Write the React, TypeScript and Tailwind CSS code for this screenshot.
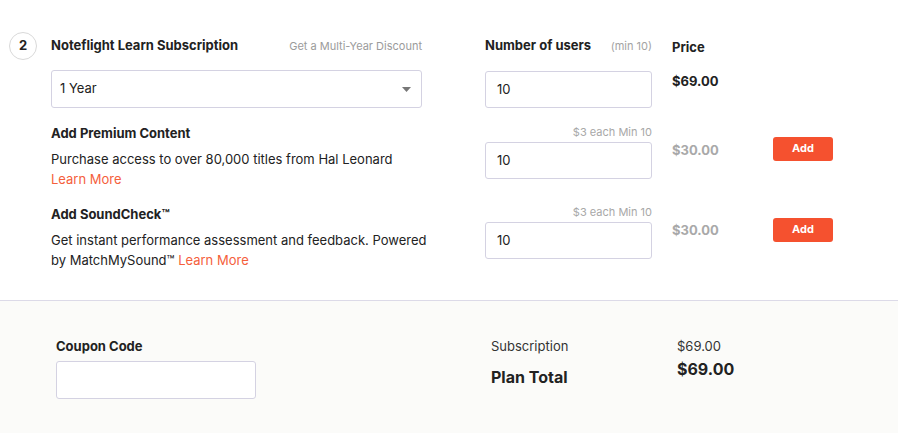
import React from 'react';

const ORANGE = 'bg-[#f5512f]';

const AddButton: React.FC = () => (
  <button className={`${ORANGE} w-[60px] h-[24px] rounded-[3px] text-white text-[11px] font-bold leading-none`}>
    Add
  </button>
);

const QtyInput: React.FC<{ value: string }> = ({ value }) => (
  <div className="w-[167px] h-[37px] border border-[#d4d2e2] rounded-[3px] bg-white flex items-center pl-[11px] text-[13px] text-[#222]">
    {value}
  </div>
);

const App: React.FC = () => {
  return (
    <div className="w-full bg-white text-[#222] font-['Inter','Liberation_Sans',sans-serif]">
      {/* subscription rows */}
      <div className="pl-[9px] pt-[32px] pb-[30px] border-b border-[#dcdae8]">
        {/* header */}
        <div className="flex items-center h-[28px]">
          <div className="w-[28px] h-[28px] rounded-full border border-[#d9d9d9] flex items-center justify-center text-[13px] font-bold">
            2
          </div>
          <div className="ml-[14px] w-[371px] flex items-center justify-between">
            <span className="text-[13px] font-bold">Noteflight Learn Subscription</span>
            <span className="text-[11px] text-[#9b9b9b]">Get a Multi-Year Discount</span>
          </div>
          <div className="ml-[63px] w-[167px] flex items-center justify-between">
            <span className="text-[13px] font-bold">Number of users</span>
            <span className="text-[11px] text-[#a3a3a3]">(min 10)</span>
          </div>
          <div className="ml-[20px] mt-[4px] text-[13px] font-bold">Price</div>
        </div>

        {/* plan select */}
        <div className="flex items-start mt-[10px] pl-[42px]">
          <div className="w-[371px] h-[38px] border border-[#d4d2e2] rounded-[3px] flex items-center justify-between pl-[8px] pr-[10px] text-[13px]">
            <span>1 Year</span>
            <svg width="9" height="5" viewBox="0 0 9 5">
              <polygon points="0,0 9,0 4.5,5" fill="#777" />
            </svg>
          </div>
          <div className="ml-[63px] mt-[1px]">
            <QtyInput value="10" />
          </div>
          <div className="ml-[20px] mt-[1px] text-[13px] leading-[20px] font-bold">$69.00</div>
        </div>

        {/* premium content */}
        <div className="flex items-start mt-[15px] pl-[42px]">
          <div className="w-[371px]">
            <div className="text-[13px] leading-[20px] font-bold">Add Premium Content</div>
            <div className="mt-[6px] text-[13px] leading-[20px]">
              Purchase access to over 80,000 titles from Hal Leonard
              <br />
              <span className="text-[#f5603c]">Learn More</span>
            </div>
          </div>
          <div className="ml-[63px] w-[167px] mt-[2px]">
            <div className="text-right text-[11px] leading-[14px] text-[#a8a8a8]">$3 each Min 10</div>
            <div className="mt-[3px]">
              <QtyInput value="10" />
            </div>
          </div>
          <div className="ml-[20px] w-[101px] mt-[17px] text-[13px] leading-[20px] font-bold text-[#a9a9a9]">$30.00</div>
          <div className="mt-[11px]">
            <AddButton />
          </div>
        </div>

        {/* soundcheck */}
        <div className="flex items-start mt-[15px] pl-[42px]">
          <div className="w-[371px]">
            <div className="text-[13px] leading-[20px] font-bold">Add SoundCheck™</div>
            <div className="mt-[6px] text-[13px] leading-[20px]">
              <span className="whitespace-nowrap">Get instant performance assessment and feedback. Powered</span>
              <br />
              by MatchMySound™ <span className="text-[#f5603c]">Learn More</span>
            </div>
          </div>
          <div className="ml-[63px] w-[167px] mt-[1px]">
            <div className="text-right text-[11px] leading-[14px] text-[#a8a8a8]">$3 each Min 10</div>
            <div className="mt-[3px]">
              <QtyInput value="10" />
            </div>
          </div>
          <div className="ml-[20px] w-[101px] mt-[16px] text-[13px] leading-[20px] font-bold text-[#a9a9a9]">$30.00</div>
          <div className="mt-[11px]">
            <AddButton />
          </div>
        </div>
      </div>

      {/* totals */}
      <div className="bg-[#fbfbf9] h-[140px] flex items-start pt-[35px] pl-[56px]">
        <div className="w-[200px]">
          <div className="text-[13px] leading-[20px] font-bold">Coupon Code</div>
          <div className="mt-[5px] h-[38px] bg-white border border-[#d4d2e2] rounded-[3px]" />
        </div>
        <div className="ml-[235px] w-[186px]">
          <div className="text-[13px] leading-[20px] text-[#333]">Subscription</div>
          <div className="mt-[10px] text-[16px] leading-[22px] font-bold">Plan Total</div>
        </div>
        <div>
          <div className="text-[13px] leading-[20px] text-[#333]">$69.00</div>
          <div className="mt-[1px] text-[16px] leading-[24px] font-bold">$69.00</div>
        </div>
      </div>
    </div>
  );
};

export default App;
